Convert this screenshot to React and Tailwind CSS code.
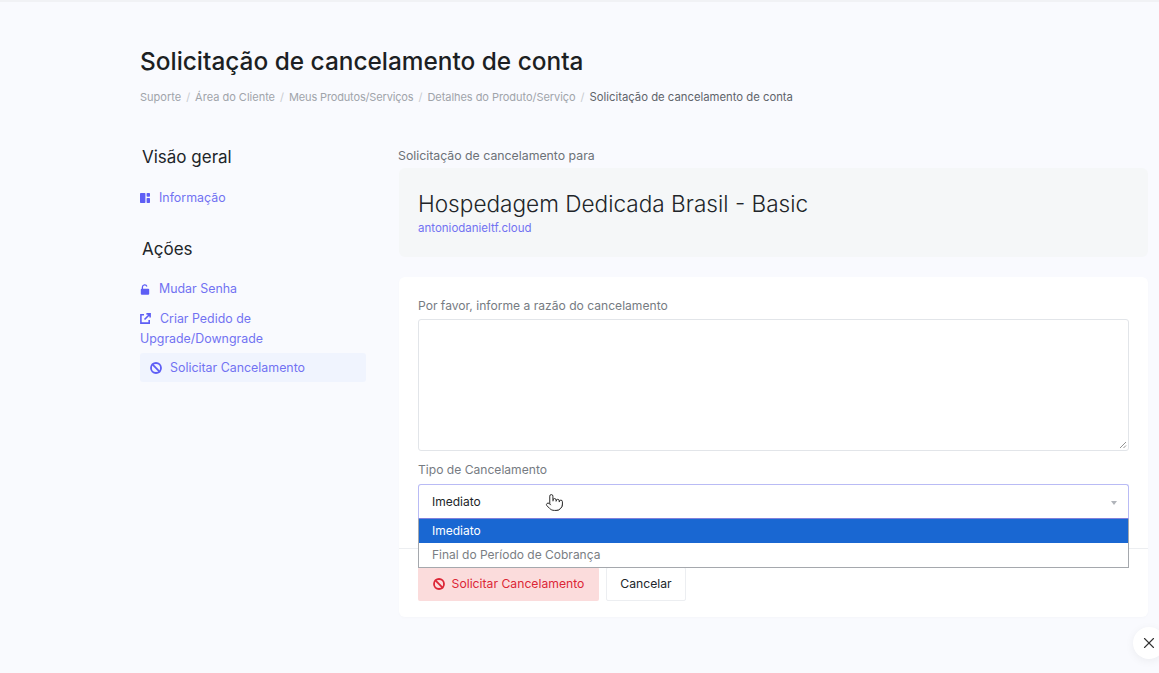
import { Ban, Pointer, X } from "lucide-react";

function DashIcon() {
  return (
    <svg width="10" height="10" viewBox="0 0 10 10" className="fill-[#5e5ef5]">
      <rect x="0" y="0" width="5.4" height="10" rx="0.7" />
      <rect x="6.6" y="0" width="3.4" height="3.8" rx="0.7" />
      <rect x="6.6" y="5" width="3.4" height="5" rx="0.7" />
    </svg>
  );
}

function LockIcon() {
  return (
    <svg width="10" height="11" viewBox="0 0 10 11" className="text-[#5e5ef5]">
      <path d="M2.4 5V3.1a2.3 2.3 0 0 1 4.5-.6" fill="none" stroke="currentColor" strokeWidth="1.3" />
      <rect x="0.8" y="4.8" width="8.4" height="6" rx="1" fill="currentColor" />
    </svg>
  );
}

function LinkIcon() {
  return (
    <svg width="11" height="11" viewBox="0 0 11 11" fill="none" stroke="currentColor" strokeWidth="1.6" className="mr-[9px] inline -translate-y-px text-[#5e5ef5]">
      <path d="M4 1.8H0.9v8.3h8.3V7" />
      <path d="M4.5 6.5 10 1M6.4 0.9h3.7v3.7" />
    </svg>
  );
}

function Sidebar() {
  return (
    <aside className="w-[226px] shrink-0 text-[12.4px] text-[#7272f2]">
      <h5 className="pl-[2px] text-[17px] leading-[24px] text-[#212529]">Visão geral</h5>
      <a className="mt-[20px] flex h-[18px] items-center">
        <DashIcon />
        <span className="ml-[9px]">Informação</span>
      </a>
      <h5 className="mt-[30px] pl-[2px] text-[17px] leading-[24px] text-[#212529]">Ações</h5>
      <a className="mt-[18px] flex h-[20px] items-center">
        <LockIcon />
        <span className="ml-[9px]">Mudar Senha</span>
      </a>
      <a className="mt-[10px] block leading-[20px]">
        <LinkIcon />
        Criar Pedido de
        <br />
        Upgrade/Downgrade
      </a>
      <a className="mt-[4px] flex h-[29px] items-center rounded-[3px] bg-[#f0f4fe] pl-[10px] pt-[1px]">
        <Ban size={12} strokeWidth={3.6} className="text-[#5e5ef5]" />
        <span className="ml-[8px]">Solicitar Cancelamento</span>
      </a>
    </aside>
  );
}

function CancelForm() {
  return (
    <form className="relative mt-[20px] h-[340px] rounded-[6px] bg-white px-[19px] pt-[20px] shadow-[0_1px_3px_rgba(0,0,0,0.02)]">
      <label className="block text-[12.1px] leading-[18px] text-[#767b82]">Por favor, informe a razão do cancelamento</label>
      <div className="relative mt-[4px] h-[132px] rounded-[3px] border border-[#e2e5e9] bg-white">
        <svg width="8" height="8" viewBox="0 0 8 8" className="absolute bottom-[1px] right-[1px] stroke-[#777]">
          <path d="M1 7 7 1M4.5 7 7 4.5" strokeWidth="0.8" />
        </svg>
      </div>
      <label className="mt-[10px] block text-[12.1px] leading-[18px] text-[#767b82]">Tipo de Cancelamento</label>
      <div className="relative mt-[5px] flex h-[35px] items-center rounded-t-[3px] border border-[#b9bbf5] border-b-[#7f81dc] pl-[13px] text-[12px] text-[#212529]">
        Imediato
        <span className="absolute right-[11px] top-[16px] h-0 w-0 border-x-[3px] border-t-[4px] border-x-transparent border-t-[#b0b4ba]" />
      </div>
      <div className="absolute inset-x-[19px] top-[242px] z-10 border border-t-0 border-[#a5a8ad] bg-white text-[12px]">
        <div className="flex h-[24px] items-center bg-[#1967d2] pl-[13px] text-white">Imediato</div>
        <div className="flex h-[24px] items-center pl-[13px] text-[#7a7e83]">Final do Período de Cobrança</div>
      </div>
      <div className="-mx-[19px] mt-[29px] border-t border-[#eceef1]" />
      <div className="mt-[18px] flex gap-[7px] text-[12.2px]">
        <button type="button" className="flex h-[34px] w-[181px] items-center justify-center gap-[7px] rounded-[2px] bg-[#fbdcdc] text-[#dc2636]">
          <Ban size={12} strokeWidth={3.6} />
          Solicitar Cancelamento
        </button>
        <button type="button" className="h-[34px] w-[80px] rounded-[2px] border border-[#eceef1] bg-white text-[#212529]">
          Cancelar
        </button>
      </div>
    </form>
  );
}

export default function App() {
  return (
    <div className="relative h-[673px] w-[1159px] overflow-hidden border-t-2 border-[#f1f2f5] bg-[#f9fafe] font-['Inter','Liberation_Sans',sans-serif]">
      <div className="pl-[140px] pr-[10px] pt-[43px]">
        <h1 className="text-[24.4px] font-medium leading-[32px] text-[#1c1f23]">Solicitação de cancelamento de conta</h1>
        <nav className="mt-[11px] flex gap-[5px] text-[11px] leading-[18px] text-[#a0a4aa]">
          <span>Suporte</span>
          <span className="text-[#c8cbd0]">/</span>
          <span>Área do Cliente</span>
          <span className="text-[#c8cbd0]">/</span>
          <span className="tracking-[-0.15px]">Meus Produtos/Serviços</span>
          <span className="text-[#c8cbd0]">/</span>
          <span className="tracking-[-0.05px]">Detalhes do Produto/Serviço</span>
          <span className="text-[#c8cbd0]">/</span>
          <span className="text-[11.3px] text-[#5f646b]">Solicitação de cancelamento de conta</span>
        </nav>
        <div className="mt-[39px] flex gap-[33px]">
          <Sidebar />
          <main className="w-[749px]">
            <p className="-ml-px mt-[2px] text-[12.3px] leading-[18px] text-[#6c7177]">Solicitação de cancelamento para</p>
            <div className="mt-[3px] h-[89px] rounded-[6px] bg-[#f5f7f8] pl-[19px] pt-[21px]">
              <h2 className="text-[22.6px] font-light leading-[30px] text-[#212529]">Hospedagem Dedicada Brasil - Basic</h2>
              <a className="block text-[11.5px] leading-[18px] text-[#7272f2]">antoniodanieltf.cloud</a>
            </div>
            <CancelForm />
          </main>
        </div>
      </div>
      <Pointer size={19} strokeWidth={1.2} className="absolute left-[545px] top-[491px] z-20 fill-white text-[#222]" />
      <button className="absolute left-[1133px] top-[625px] flex h-[32px] w-[32px] items-center justify-center rounded-full bg-white shadow-[0_2px_10px_rgba(0,0,0,0.06)]">
        <X size={18} strokeWidth={1.5} className="text-[#333]" />
      </button>
    </div>
  );
}
